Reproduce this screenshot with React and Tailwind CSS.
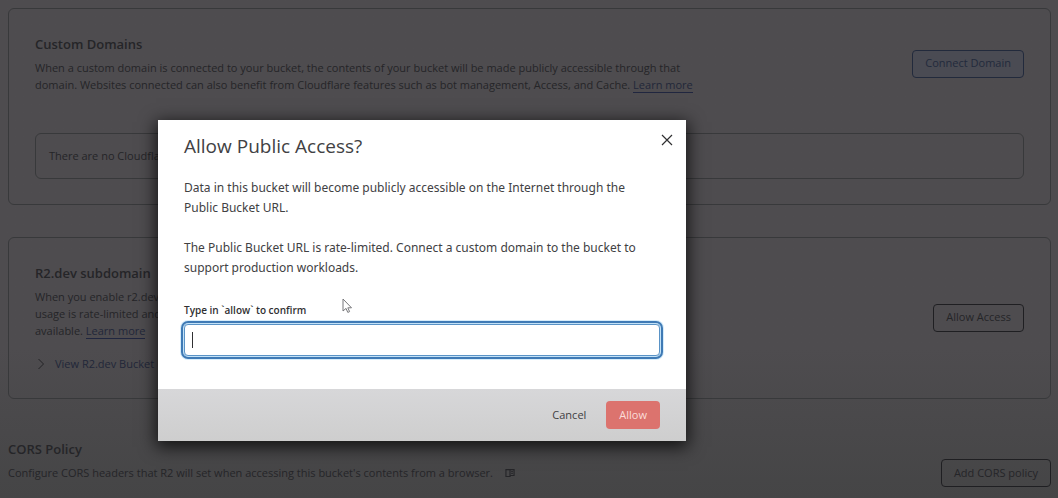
const outlineButton =
  "h-7 shrink-0 rounded-sm border px-3 text-[11px] whitespace-nowrap";

function LearnMore() {
  return (
    <a href="#learn-more" className="border-b border-[#20263f] text-[#222739]">
      Learn more
    </a>
  );
}

function BookIcon() {
  return (
    <svg viewBox="0 0 16 16" className="size-[10px]" fill="none" stroke="currentColor" strokeWidth="1.8" aria-hidden="true">
      <path d="M1.500 2.500H8v11H1.500zM8 2.500h6.500v9.500H9L8 13.500M10 5.500h2.500M10 8.500h2.500" />
    </svg>
  );
}

function Settings() {
  return (
    <main className="min-h-screen bg-linear-to-b from-[#4e4c4f] from-70% to-[#454546] pt-2 pr-[7px] pl-2 text-[#252528]">
      <section className="rounded-md border border-[#38393b] px-[26px] pt-[25px] pb-[25px]">
        <div className="flex items-center justify-between">
          <div>
            <h2 className="text-[13px] leading-5 font-semibold">Custom Domains</h2>
            <p className="mt-[5px] max-w-[660px] text-[11px] leading-[17px]">
              When a custom domain is connected to your bucket, the contents of your bucket will be made publicly
              accessible through that domain. Websites connected can also benefit from Cloudflare features such as bot
              management, Access, and Cache. <LearnMore />
            </p>
          </div>
          <button type="button" className={outlineButton + " border-[#222a3c] bg-[#4a4b53] text-[#222a3c]"}>
            Connect Domain
          </button>
        </div>
        <div className="mt-10 rounded-md border border-[#38393b] px-[13px] py-[13px] text-[11px] leading-[18px]">
          There are no Cloudflare domains
        </div>
      </section>

      <section className="mt-8 rounded-md border border-[#38393b] px-[26px] pt-[25px] pb-[26px]">
        <div className="flex items-center justify-between">
          <div>
            <h2 className="flex items-center gap-2 text-[13px] leading-5 font-semibold">
              R2.dev subdomain
              <svg viewBox="0 0 12 12" className="size-3" fill="none" stroke="#38393b" aria-hidden="true">
                <circle cx="6" cy="6" r="5" />
                <path d="M6 5.500v3M6 3v1" />
              </svg>
            </h2>
            <p className="mt-[5px] text-[11px] leading-[17px]">
              When you enable r2.dev subdomain
              <br />
              usage is rate-limited and Access
              <br />
              available. <LearnMore />
            </p>
            <a href="#bucket-access" className="mt-[17px] flex items-center gap-2 text-[11px] leading-4 text-[#222739]">
              <svg viewBox="0 0 12 12" className="size-3" fill="none" stroke="#232326" aria-hidden="true">
                <path d="M3.500 1l5 5-5 5" />
              </svg>
              View R2.dev Bucket URL
            </a>
          </div>
          <button type="button" className={outlineButton + " border-[#1f1f22]"}>
            Allow Access
          </button>
        </div>
      </section>

      <section className="mt-10">
        <h2 className="text-[13px] leading-5 font-semibold">CORS Policy</h2>
        <div className="flex items-center justify-between">
          <p className="flex items-center gap-3 text-[11px] leading-5">
            Configure CORS headers that R2 will set when accessing this bucket's contents from a browser.
            <BookIcon />
          </p>
          <button type="button" className={outlineButton + " border-[#1f1f22]"}>
            Add CORS policy
          </button>
        </div>
      </section>
    </main>
  );
}

function Dialog() {
  return (
    <div className="absolute inset-0 flex items-start justify-center pt-[120px] pr-[214px]">
      <div
        role="dialog"
        aria-modal="true"
        aria-labelledby="dialog-title"
        className="relative w-full max-w-[528px] bg-white text-[#414143] shadow-[0_4px_16px_2px_rgba(0,0,0,0.75)]"
      >
        <div className="px-[26px] pt-3 pb-[33px]">
          <div className="flex items-start justify-between">
            <h1 id="dialog-title" className="text-[19px] leading-7">
              Allow Public Access?
            </h1>
            <button type="button" aria-label="Close" className="-mr-[15px] p-[2px]">
              <svg viewBox="0 0 12 12" className="size-3" fill="none" stroke="#303032" strokeWidth="1.2" aria-hidden="true">
                <path d="M1 1l10 10M11 1L1 11" />
              </svg>
            </button>
          </div>
          <div className="mt-[18px] grid gap-5 font-['Noto_Sans',sans-serif] text-xs leading-5">
            <p>Data in this bucket will become publicly accessible on the Internet through the Public Bucket URL.</p>
            <p>
              The Public Bucket URL is rate-limited. Connect a custom domain to the bucket to support production
              workloads.
            </p>
          </div>
          <label htmlFor="confirm" className="mt-[22px] block text-[10px] leading-5 font-semibold text-[#303032]">
            Type in `allow` to confirm
          </label>
          <div className="relative mt-1">
            <input
              id="confirm"
              type="text"
              className="block h-8 w-full rounded-sm border border-[#5a93c6] px-2 text-xs caret-transparent shadow-[0_0_0_1px_#c3e2f7,0_0_0_3px_#3f7ab5,0_0_0_4px_#d6ecfa] outline-none"
            />
            <span className="absolute top-2 left-2 h-4 w-px bg-[#303032]" />
          </div>
        </div>
        <div className="flex items-center justify-end gap-2 bg-linear-to-b from-[#d7d7d9] to-[#cecece] px-[26px] py-3">
          <button type="button" className="h-7 px-3 text-[11px]">
            Cancel
          </button>
          <button type="button" className="h-7 rounded-sm bg-[#dc736e] px-[13px] text-[11px] text-[#fbdcd8]">
            Allow
          </button>
        </div>
        <svg viewBox="0 0 10 16" className="absolute top-[178px] left-[184px] h-4 w-[10px]" fill="#fff" stroke="#77777a" aria-hidden="true">
          <path d="M1 1v12l3-2.600 1.800 4 1.800-.8-1.800-3.800H9.500z" />
        </svg>
      </div>
    </div>
  );
}

export default function App() {
  return (
    <div className="relative font-['Open_Sans','Noto_Sans',sans-serif]">
      <Settings />
      <Dialog />
    </div>
  );
}
